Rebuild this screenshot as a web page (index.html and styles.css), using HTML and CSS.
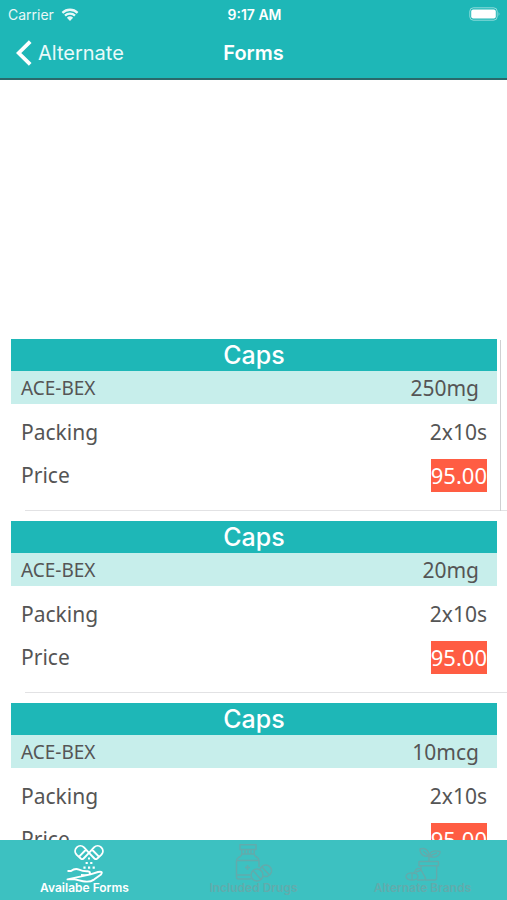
FILE: index.html
```html
<!DOCTYPE html>
<html lang="en">
<head>
<meta charset="utf-8">
<meta name="viewport" content="width=device-width, initial-scale=1">
<title>Forms</title>
<link rel="stylesheet" href="styles.css">
</head>
<body>
<header class="top">
  <div class="status">
    <span class="carrier">Carrier
      <svg class="wifi" viewBox="0 0 18 13" aria-hidden="true"><path d="M1.4 4.8a11 11 0 0 1 15.2 0M4 7.6a7.2 7.2 0 0 1 10 0" fill="none" stroke="currentColor" stroke-width="2.3"/><path d="M9 12.9 5.9 9.8a4.5 4.5 0 0 1 6.2 0z" fill="currentColor"/></svg>
    </span>
    <span class="clock">9:17 AM</span>
    <svg class="battery" viewBox="0 0 32 14" aria-hidden="true"><rect x=".8" y=".8" width="27.4" height="12.4" rx="3.6" fill="none" stroke="currentColor" stroke-opacity=".5"/><rect x="2.2" y="2.4" width="24.6" height="9.2" rx="2" fill="currentColor"/><path d="M29.6 4.8q1.8 2.2 0 4.4z" fill="currentColor" fill-opacity=".55"/></svg>
  </div>
  <nav class="bar">
    <a class="back" href="#alternate"><svg class="chevron" viewBox="0 0 16 26" aria-hidden="true"><path d="M14.2 1.7 2.7 13l11.5 11.3" fill="none" stroke="currentColor" stroke-width="3.8"/></svg>Alternate</a>
    <h1 class="title">Forms</h1>
  </nav>
</header>
<main class="list">
  <section class="form">
    <h2 class="kind">Caps</h2>
    <div class="drug"><span class="name">ACE-BEX</span><span>250mg</span></div>
    <dl class="facts">
      <div class="fact"><dt>Packing</dt><dd>2x10s</dd></div>
      <div class="fact"><dt>Price</dt><dd class="price">95.00</dd></div>
    </dl>
    <span class="indicator"></span>
  </section>
  <section class="form">
    <h2 class="kind">Caps</h2>
    <div class="drug"><span class="name">ACE-BEX</span><span>20mg</span></div>
    <dl class="facts">
      <div class="fact"><dt>Packing</dt><dd>2x10s</dd></div>
      <div class="fact"><dt>Price</dt><dd class="price">95.00</dd></div>
    </dl>
  </section>
  <section class="form">
    <h2 class="kind">Caps</h2>
    <div class="drug"><span class="name">ACE-BEX</span><span>10mcg</span></div>
    <dl class="facts">
      <div class="fact"><dt>Packing</dt><dd>2x10s</dd></div>
      <div class="fact"><dt>Price</dt><dd class="price">95.00</dd></div>
    </dl>
  </section>
</main>
<nav class="tabs">
  <a class="tab active" href="#forms">
    <svg class="icon" viewBox="0 0 38 38" fill="none" stroke="currentColor" stroke-width="1.9" stroke-linejoin="round" aria-hidden="true"><path d="M23 9.8 18 4.4A5.2 5.2 0 0 0 10.5 11.6L15 15.8Q16.3 16.6 17.6 15.5zM23 9.8 28 4.4A5.2 5.2 0 0 1 35.5 11.6L31 15.8Q29.7 16.6 28.4 15.5zM13.6 13.2 19.6 7M32.4 13.2 26.4 7"/><path d="M22 15.5h2M19.6 20h2.2M24.2 20h2.2M17.4 24.6h2.2M22 24.6h2.2M26.6 24.6h2.2" stroke-width="2.2"/><path d="M1.5 28H5Q9 25 13 26.6 17 28.4 21.5 28.2 25 28.6 23.6 31.2 22.5 32.4 15 32M24.5 31.4 32 29Q37.5 28 35 31.4L28 36.6Q23.5 39.6 17 38.2L9 36.4H1.5z"/></svg>
    <span>Availabe Forms</span>
  </a>
  <a class="tab" href="#drugs">
    <svg class="icon" viewBox="0 0 38 38" fill="none" stroke="currentColor" stroke-width="1.5" stroke-linejoin="round" aria-hidden="true"><path d="M5 1.8h16v4.7H5zM6.8 6.5v5Q6 13.5 3.5 14.5 1.5 16 1.5 18v16q0 2 2 2H16M19.2 6.5v5Q20 13.5 22.5 14.5 24 16 24 18v6M6.8 11h12.4M1.5 17.5H24M1.5 32H15M10 6.5V11M13 6.5V11M16 6.5V11M12.5 22v5M10 24.5h5"/><circle cx="22" cy="32" r="6"/><path d="M25 26.6A5.8 5.8 0 1 1 28.2 33M18 27.6l8 8.8M27 24l7.5 8"/></svg>
    <span>Included Drugs</span>
  </a>
  <a class="tab" href="#brands">
    <svg class="icon" viewBox="0 0 38 38" fill="none" stroke="currentColor" stroke-width="1.4" stroke-linejoin="round" aria-hidden="true"><path d="M15 18.5h19.5v4.3H15zM17 22.8v3M32.6 22.8V35q0 2-2 2H21M25 18.5V11M25 13C20 14 16 12 16 6c5-1.500 9 1 9 7 1-5 5-6 11-4.500 0 5-6 7-11 4.500M19 8l6 5M33 10l-8 3"/><path d="M9.500 31 12 26.500q2-2 4.500-.5l5 9q0 2-2 2H13M12 29l6-2"/><ellipse cx="8" cy="33.500" rx="6" ry="3.600"/><path d="M8 30v7"/></svg>
    <span>Alternate Brands</span>
  </a>
</nav>
</body>
</html>
```

FILE: styles.css
```css
* { box-sizing: border-box; }

body {
  margin: 0;
  height: 100vh;
  display: flex;
  flex-direction: column;
  background: #fff;
  color: #555;
  font-family: "Noto Sans", sans-serif;
}

a { color: inherit; text-decoration: none; }
h1, h2, dl, dd { margin: 0; }

.top {
  flex: none;
  background: #1eb7b7;
  border-bottom: 2px solid #2a696b;
  color: #fff;
  font-family: Inter, sans-serif;
}

.status, .bar {
  display: grid;
  grid-template-columns: 1fr auto 1fr;
  align-items: center;
}

.status {
  height: 28px;
  padding: 0 6px 0 8px;
  font-size: 14px;
}

.carrier { display: flex; align-items: center; gap: 7px; opacity: .9; }
.wifi { width: 18px; height: 13px; }
.clock { font-weight: 600; }
.battery { width: 32px; height: 14px; justify-self: end; }

.bar { height: 50px; padding: 0 16px; }
.back { display: flex; align-items: center; gap: 6px; font-size: 20px; color: #e9fafa; }
.chevron { width: 16px; height: 26px; color: #fff; }
.title { font-size: 20px; font-weight: 600; }

.list {
  flex: 1;
  min-height: 0;
  overflow: hidden;
  padding-top: 259px;
}

.form {
  position: relative;
  margin-bottom: 10px;
}

.form::after {
  content: "";
  display: block;
  margin-left: 25px;
  border-bottom: 1px solid #e2e2e4;
}

.kind {
  margin: 0 10px 0 11px;
  padding-top: 1px;
  background: #1eb7b7;
  color: #fff;
  font: 500 25px/31px Inter, sans-serif;
  text-align: center;
}

.drug {
  display: flex;
  justify-content: space-between;
  margin: 0 10px 0 11px;
  padding: 2px 18px 0 10px;
  background: #c7eeeb;
  font-size: 21px;
  line-height: 31px;
}

.name { font-size: 19px; }

.facts {
  display: grid;
  gap: 10px;
  padding: 12px 20px 18px 21px;
}

.fact {
  display: flex;
  justify-content: space-between;
  font-size: 21px;
  line-height: 33px;
}

.price { background: #ff5d43; color: #fff; font-size: 22px; }

.indicator {
  position: absolute;
  top: 1px;
  right: 6px;
  bottom: 0;
  width: 1px;
  background: #d0d0d2;
}

.tabs {
  flex: none;
  display: grid;
  grid-template-columns: repeat(3, 1fr);
  height: 60px;
  background: #3dc1c1;
  font: 600 12px/14px Inter, sans-serif;
}

.tab {
  display: flex;
  flex-direction: column;
  align-items: center;
  padding-top: 3px;
  color: #62abac;
  white-space: nowrap;
}

.active { color: #fff; }
.icon { width: 38px; height: 38px; overflow: visible; }
```
